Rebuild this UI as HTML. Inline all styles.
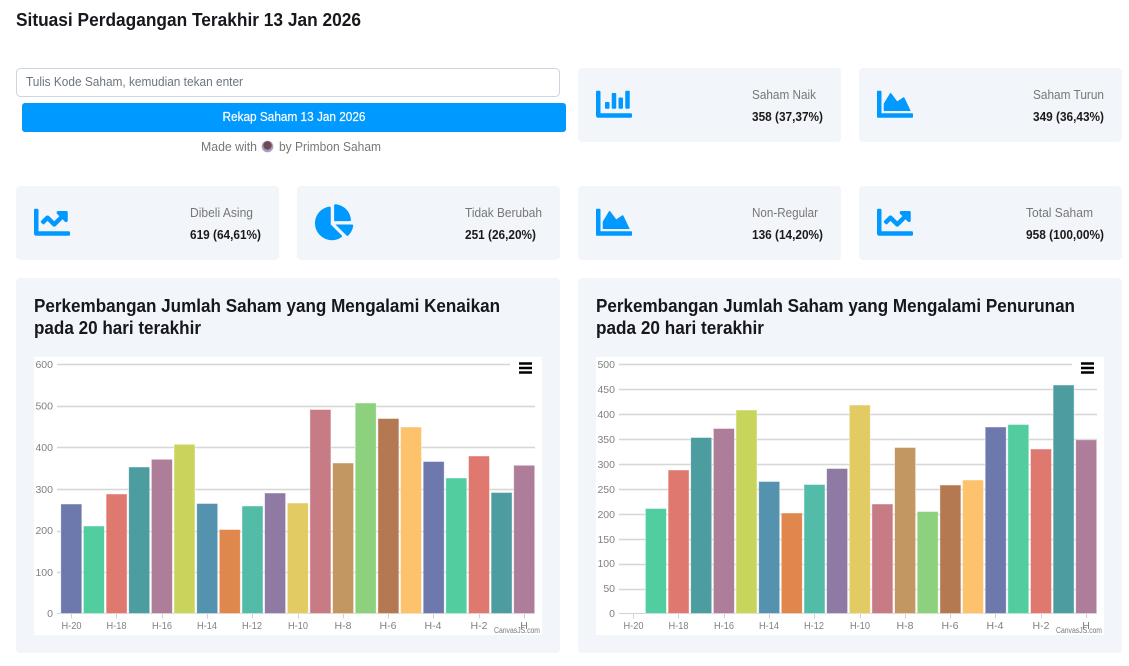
<!DOCTYPE html>
<html lang="id"><head><meta charset="utf-8"><title>Situasi Perdagangan</title>
<style>
html,body{margin:0;padding:0;background:#fff;width:1129px;height:666px;overflow:hidden}
svg{display:block;font-family:"Liberation Sans",sans-serif}
.c{fill:#f2f5f9}
.l{font-size:12.5px;fill:#777}
.v{font-size:12.5px;font-weight:700;fill:#1a1a1a}
.t{font-size:18.5px;font-weight:700;fill:#16181d}
.i{fill:#0099ff}
.g{stroke:#d6d6d6;stroke-width:1.4;fill:none}
.a{stroke:#d2d2d2;stroke-width:1;fill:none}
.y{font-size:10.5px;fill:#808080;text-anchor:end}
.x{font-size:10.5px;fill:#808080;text-anchor:middle}
.w{font-size:8px;fill:#777}
.b rect{stroke:#fff;stroke-opacity:.55;stroke-width:.8;width:21px}
</style></head><body>
<svg width="1129" height="666" viewBox="0 0 1129 666" xmlns="http://www.w3.org/2000/svg">
<defs>
<path id="bar" d="M332.8 320h38.4c6.4 0 12.8-6.4 12.8-12.8V172.8c0-6.4-6.4-12.8-12.8-12.8h-38.4c-6.4 0-12.8 6.4-12.8 12.8v134.4c0 6.4 6.4 12.8 12.8 12.8zm96 0h38.4c6.4 0 12.8-6.4 12.8-12.8V76.8c0-6.4-6.4-12.8-12.8-12.8h-38.4c-6.4 0-12.8 6.4-12.8 12.8v230.4c0 6.4 6.4 12.8 12.8 12.8zm-288 0h38.4c6.4 0 12.8-6.4 12.8-12.8v-70.4c0-6.4-6.4-12.8-12.8-12.8h-38.4c-6.4 0-12.8 6.4-12.8 12.8v70.4c0 6.4 6.4 12.8 12.8 12.8zm96 0h38.4c6.4 0 12.8-6.4 12.8-12.8V108.8c0-6.4-6.4-12.8-12.8-12.8h-38.4c-6.4 0-12.8 6.4-12.8 12.8v198.4c0 6.4 6.4 12.8 12.8 12.8zM496 384H64V80c0-8.84-7.16-16-16-16H16C7.16 64 0 71.16 0 80v336c0 17.67 14.33 32 32 32h464c8.84 0 16-7.16 16-16v-32c0-8.84-7.16-16-16-16z"/>
<path id="area" d="M500 384c6.6 0 12 5.4 12 12v40c0 6.6-5.4 12-12 12H12c-6.6 0-12-5.4-12-12V76c0-6.6 5.4-12 12-12h40c6.6 0 12 5.4 12 12v308h436zM372.7 159.5L288 216l-85.3-113.7c-5.1-6.8-15.5-6.3-19.9 1L96 248v104h384l-89.9-187.8c-3.2-6.5-11.4-8.7-17.4-4.7z"/>
<path id="line" d="M496 384H64V80c0-8.84-7.16-16-16-16H16C7.16 64 0 71.16 0 80v336c0 17.67 14.33 32 32 32h464c8.84 0 16-7.16 16-16v-32c0-8.84-7.16-16-16-16zM464 96H345.94c-21.38 0-32.09 25.85-16.97 40.97l32.4 32.4L288 242.75l-73.37-73.37c-12.5-12.5-32.76-12.5-45.25 0l-68.69 68.69c-6.25 6.25-6.25 16.38 0 22.63l22.62 22.62c6.25 6.25 16.38 6.25 22.63 0L192 237.25l73.37 73.37c12.5 12.5 32.76 12.5 45.25 0l96-96 32.4 32.4c15.12 15.12 40.97 4.41 40.97-16.97V112c.01-8.84-7.15-16-15.99-16z"/>
<path id="pie" d="M527.79 288H290.5l158.03 158.03c6.04 6.04 15.98 6.53 22.19.68 38.7-36.46 65.32-85.61 73.13-140.86 1.34-9.46-6.51-17.85-16.06-17.85zm-15.83-64.8C503.72 103.74 408.26 8.28 288.8.04 279.68-.59 272 7.1 272 16.24V240h223.77c9.14 0 16.82-7.68 16.19-16.8zM224 288V50.71c0-9.55-8.39-17.4-17.84-16.06C86.99 51.49-4.1 155.6.14 280.37 4.5 408.51 114.83 513.59 243.03 511.98c50.4-.63 96.97-16.87 135.26-44.03 7.9-5.6 8.42-17.23 2.83-22.83L224 288z"/>
</defs>

<text x="16" y="26" font-size="18" font-weight="700" fill="#16181d" textLength="345" lengthAdjust="spacingAndGlyphs">Situasi Perdagangan Terakhir 13 Jan 2026</text>

<rect x="16.5" y="68.5" width="543" height="28" rx="4" fill="#fff" stroke="#ced4e0"/>
<text x="26" y="86" font-size="12.5" fill="#6c757d" textLength="217" lengthAdjust="spacingAndGlyphs">Tulis Kode Saham, kemudian tekan enter</text>
<rect x="22" y="103" width="544" height="29" rx="3" fill="#0099ff"/>
<text x="222.5" y="121" font-size="12.5" fill="#fff" stroke="#fff" stroke-width=".2" textLength="143" lengthAdjust="spacingAndGlyphs">Rekap Saham 13 Jan 2026</text>
<text x="201" y="151" font-size="12.5" fill="#777" textLength="56" lengthAdjust="spacingAndGlyphs">Made with</text>
<circle cx="267.5" cy="146.5" r="5.8" fill="#a99cc4"/><circle cx="267.5" cy="145.5" r="4.2" fill="#6e4a55"/>
<text x="279" y="151" font-size="12.5" fill="#777" textLength="102" lengthAdjust="spacingAndGlyphs">by Primbon Saham</text>

<rect class="c" x="578" y="68" width="263" height="74" rx="4"/>
<rect class="c" x="859" y="68" width="263" height="74" rx="4"/>
<rect class="c" x="16" y="186" width="263" height="74" rx="4"/>
<rect class="c" x="297" y="186" width="263" height="74" rx="4"/>
<rect class="c" x="578" y="186" width="263" height="74" rx="4"/>
<rect class="c" x="859" y="186" width="263" height="74" rx="4"/>
<rect class="c" x="16" y="278" width="544" height="375" rx="4"/>
<rect class="c" x="578" y="278" width="544" height="375" rx="4"/>

<use href="#bar" class="i" transform="translate(596 86.2) scale(.0703)"/>
<use href="#area" class="i" transform="translate(877 86.2) scale(.0703)"/>
<use href="#line" class="i" transform="translate(34 204.2) scale(.0703)"/>
<use href="#pie" class="i" transform="translate(315 204.2) scale(.0703)"/>
<use href="#area" class="i" transform="translate(596 204.2) scale(.0703)"/>
<use href="#line" class="i" transform="translate(877 204.2) scale(.0703)"/>

<text class="l" x="752" y="99" textLength="64" lengthAdjust="spacingAndGlyphs">Saham Naik</text>
<text class="v" x="752" y="121" textLength="71" lengthAdjust="spacingAndGlyphs">358 (37,37%)</text>
<text class="l" x="1033" y="99" textLength="71" lengthAdjust="spacingAndGlyphs">Saham Turun</text>
<text class="v" x="1033" y="121" textLength="71" lengthAdjust="spacingAndGlyphs">349 (36,43%)</text>
<text class="l" x="190" y="217" textLength="63" lengthAdjust="spacingAndGlyphs">Dibeli Asing</text>
<text class="v" x="190" y="239" textLength="71" lengthAdjust="spacingAndGlyphs">619 (64,61%)</text>
<text class="l" x="465" y="217" textLength="77" lengthAdjust="spacingAndGlyphs">Tidak Berubah</text>
<text class="v" x="465" y="239" textLength="71" lengthAdjust="spacingAndGlyphs">251 (26,20%)</text>
<text class="l" x="752" y="217" textLength="66" lengthAdjust="spacingAndGlyphs">Non-Regular</text>
<text class="v" x="752" y="239" textLength="71" lengthAdjust="spacingAndGlyphs">136 (14,20%)</text>
<text class="l" x="1026" y="217" textLength="67" lengthAdjust="spacingAndGlyphs">Total Saham</text>
<text class="v" x="1026" y="239" textLength="78" lengthAdjust="spacingAndGlyphs">958 (100,00%)</text>

<text class="t" x="34" y="312" textLength="466" lengthAdjust="spacingAndGlyphs">Perkembangan Jumlah Saham yang Mengalami Kenaikan</text>
<text class="t" x="34" y="334" textLength="167" lengthAdjust="spacingAndGlyphs">pada 20 hari terakhir</text>
<text class="t" x="596" y="312" textLength="479" lengthAdjust="spacingAndGlyphs">Perkembangan Jumlah Saham yang Mengalami Penurunan</text>
<text class="t" x="596" y="334" textLength="168" lengthAdjust="spacingAndGlyphs">pada 20 hari terakhir</text>

<rect x="34" y="357" width="508" height="278" fill="#fff"/>
<rect x="596" y="357" width="508" height="278" fill="#fff"/>

<path class="g" d="M57 364.5H510M57 406.5H535M57 447.5H535M57 489.5H535M57 531.5H535M57 572.5H535"/>
<path class="a" d="M57 613.5H535M71.5 613.5v5M116.5 613.5v5M162.5 613.5v5M207.5 613.5v5M252.5 613.5v5M298.5 613.5v5M343.5 613.5v5M388.5 613.5v5M433.5 613.5v5M479.5 613.5v5M524.5 613.5v5"/>
<g class="y"><text x="53" y="368">600</text><text x="53" y="409.500">500</text><text x="53" y="451">400</text><text x="53" y="493">300</text><text x="53" y="534">200</text><text x="53" y="576">100</text><text x="53" y="617">0</text></g>
<g class="x"><text x="71.500" y="629" textLength="20" lengthAdjust="spacingAndGlyphs">H-20</text><text x="116.500" y="629" textLength="20" lengthAdjust="spacingAndGlyphs">H-18</text><text x="162" y="629" textLength="20" lengthAdjust="spacingAndGlyphs">H-16</text><text x="207" y="629" textLength="20" lengthAdjust="spacingAndGlyphs">H-14</text><text x="252" y="629" textLength="20" lengthAdjust="spacingAndGlyphs">H-12</text><text x="298" y="629" textLength="20" lengthAdjust="spacingAndGlyphs">H-10</text><text x="343" y="629">H-8</text><text x="388" y="629">H-6</text><text x="433" y="629">H-4</text><text x="479" y="629">H-2</text><text x="524" y="629">H</text></g>
<g class="b">
<rect x="60.8" y="504" height="109.5" fill="#6D78AD"/>
<rect x="83.4" y="526" height="87.5" fill="#51CDA0"/>
<rect x="106.1" y="494" height="119.500" fill="#DF7970"/>
<rect x="128.7" y="467" height="146.5" fill="#4C9CA0"/>
<rect x="151.4" y="459.3" height="154.2" fill="#AE7D99"/>
<rect x="174" y="444.300" height="169.2" fill="#C9D45C"/>
<rect x="196.700" y="503.500" height="110" fill="#5592AD"/>
<rect x="219.300" y="529.500" height="84" fill="#DF874D"/>
<rect x="242" y="506" height="107.5" fill="#52BCA8"/>
<rect x="264.600" y="493" height="120.500" fill="#8E7AA3"/>
<rect x="287.300" y="503" height="110.500" fill="#E3CB64"/>
<rect x="309.900" y="409.500" height="204" fill="#C77B85"/>
<rect x="332.600" y="463" height="150.500" fill="#C39762"/>
<rect x="355.200" y="403" height="210.500" fill="#8DD17E"/>
<rect x="377.900" y="418.500" height="195" fill="#B57952"/>
<rect x="400.500" y="427" height="186.500" fill="#FCC26C"/>
<rect x="423.200" y="461.500" height="152" fill="#6D78AD"/>
<rect x="445.800" y="478" height="135.500" fill="#51CDA0"/>
<rect x="468.500" y="456" height="157.500" fill="#DF7970"/>
<rect x="491.100" y="492.500" height="121" fill="#4C9CA0"/>
<rect x="513.700" y="465.300" height="148.200" fill="#AE7D99"/>
</g>
<text class="w" x="494" y="633" textLength="46" lengthAdjust="spacingAndGlyphs">CanvasJS.com</text>
<path d="M519 363.500h13M519 368h13M519 372.500h13" stroke="#000" stroke-width="2.6" fill="none"/>

<path class="g" d="M619 364.500H1072M619 389.500H1097M619 414.500H1097M619 439.500H1097M619 464.500H1097M619 489.500H1097M619 514.500H1097M619 539.500H1097M619 564.500H1097M619 589.500H1097"/>
<path class="a" d="M619 613.500H1097M633.500 613.500v5M678.500 613.500v5M724.500 613.500v5M769.500 613.500v5M814.500 613.500v5M860.500 613.500v5M905.500 613.500v5M950.500 613.500v5M995.500 613.500v5M1041.500 613.500v5M1086.500 613.500v5"/>
<g class="y"><text x="615" y="368">500</text><text x="615" y="393">450</text><text x="615" y="418">400</text><text x="615" y="443">350</text><text x="615" y="468">300</text><text x="615" y="493">250</text><text x="615" y="518">200</text><text x="615" y="543">150</text><text x="615" y="567">100</text><text x="615" y="592">50</text><text x="615" y="617">0</text></g>
<g class="x"><text x="633.500" y="629" textLength="20" lengthAdjust="spacingAndGlyphs">H-20</text><text x="678.500" y="629" textLength="20" lengthAdjust="spacingAndGlyphs">H-18</text><text x="724" y="629" textLength="20" lengthAdjust="spacingAndGlyphs">H-16</text><text x="769" y="629" textLength="20" lengthAdjust="spacingAndGlyphs">H-14</text><text x="814" y="629" textLength="20" lengthAdjust="spacingAndGlyphs">H-12</text><text x="860" y="629" textLength="20" lengthAdjust="spacingAndGlyphs">H-10</text><text x="905" y="629">H-8</text><text x="950" y="629">H-6</text><text x="995" y="629">H-4</text><text x="1041" y="629">H-2</text><text x="1086" y="629">H</text></g>
<g class="b">
<rect x="645.400" y="508.500" height="105" fill="#51CDA0"/>
<rect x="668.100" y="470" height="143.500" fill="#DF7970"/>
<rect x="690.700" y="437.500" height="176" fill="#4C9CA0"/>
<rect x="713.400" y="428.500" height="185" fill="#AE7D99"/>
<rect x="736" y="410" height="203.500" fill="#C9D45C"/>
<rect x="758.700" y="481.500" height="132" fill="#5592AD"/>
<rect x="781.300" y="513" height="100.500" fill="#DF874D"/>
<rect x="804" y="484.500" height="129" fill="#52BCA8"/>
<rect x="826.600" y="468.500" height="145" fill="#8E7AA3"/>
<rect x="849.300" y="405" height="208.500" fill="#E3CB64"/>
<rect x="871.900" y="504" height="109.500" fill="#C77B85"/>
<rect x="894.600" y="447.500" height="166" fill="#C39762"/>
<rect x="917.200" y="511.500" height="102" fill="#8DD17E"/>
<rect x="939.900" y="485" height="128.500" fill="#B57952"/>
<rect x="962.500" y="480" height="133.500" fill="#FCC26C"/>
<rect x="985.200" y="427" height="186.500" fill="#6D78AD"/>
<rect x="1007.800" y="424.500" height="189" fill="#51CDA0"/>
<rect x="1030.500" y="449" height="164.500" fill="#DF7970"/>
<rect x="1053.100" y="385" height="228.500" fill="#4C9CA0"/>
<rect x="1075.700" y="439.800" height="173.700" fill="#AE7D99"/>
</g>
<text class="w" x="1056" y="633" textLength="46" lengthAdjust="spacingAndGlyphs">CanvasJS.com</text>
<path d="M1081 363.500h13M1081 368h13M1081 372.500h13" stroke="#000" stroke-width="2.6" fill="none"/>
</svg>
</body></html>
